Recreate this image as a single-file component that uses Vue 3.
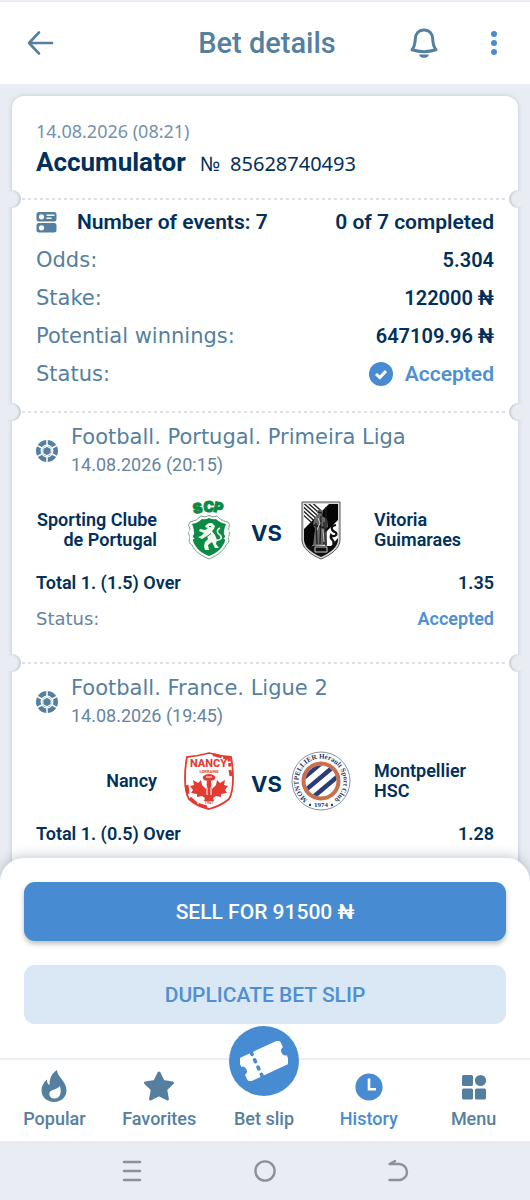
<script setup>
const summary = [
  { label: 'Odds:', value: '5.304' },
  { label: 'Stake:', value: '122000 ₦' },
  { label: 'Potential winnings:', value: '647109.96 ₦' },
]

const events = [
  {
    id: 1,
    league: 'Football. Portugal. Primeira Liga',
    time: '14.08.2026 (20:15)',
    home: 'Sporting Clube de Portugal',
    away: 'Vitoria Guimaraes',
    market: 'Total 1. (1.5) Over',
    odds: '1.35',
    status: 'Accepted',
  },
  {
    id: 2,
    league: 'Football. France. Ligue 2',
    time: '14.08.2026 (19:45)',
    home: 'Nancy',
    away: 'Montpellier HSC',
    market: 'Total 1. (0.5) Over',
    odds: '1.28',
  },
]
</script>

<template>
  <div class="screen">
    <header class="topbar">
      <button type="button" class="icon-btn" aria-label="Back">
        <svg width="28" height="26" viewBox="0 0 28 26" fill="none" stroke="currentColor" stroke-width="2.6" stroke-linecap="round" stroke-linejoin="round">
          <path d="M26 13H3M13 2.500 3 13l10 10.500" />
        </svg>
      </button>
      <h1>Bet details</h1>
      <button type="button" class="icon-btn bell" aria-label="Notifications">
        <svg width="28" height="30" viewBox="0 0 28 30" fill="none" stroke="currentColor" stroke-width="3" stroke-linejoin="round" stroke-linecap="round">
          <path d="M14 2C8.500 2 5.500 6 5.300 11 5.100 16.500 4.500 18.500 2 21.800 9 24 19 24 26 21.800 23.500 18.500 22.900 16.500 22.700 11 22.500 6 19.500 2 14 2Z" />
          <path d="M9 26.500h10c-1 2.700-3 3.300-5 3.300s-4-.6-5-3.300Z" fill="currentColor" stroke="none" />
        </svg>
      </button>
      <button type="button" class="icon-btn dots" aria-label="More">
        <svg width="8" height="26" viewBox="0 0 8 26" fill="currentColor">
          <circle cx="4" cy="4" r="3" />
          <circle cx="4" cy="13" r="3" />
          <circle cx="4" cy="22" r="3" />
        </svg>
      </button>
    </header>

    <main class="content">
      <article class="slip">
        <section class="slip-head">
          <p class="slip-date">14.08.2026 (08:21)</p>
          <h2>Accumulator <span class="number"><span>№</span> <span>85628740493</span></span></h2>
        </section>

        <section class="summary perforated">
          <div class="row">
            <strong class="count">
              <svg width="21" height="21" viewBox="0 0 20 21">
                <rect width="20" height="9.500" rx="2.500" fill="#557f9f" />
                <rect y="11" width="20" height="9.500" rx="2.500" fill="#557f9f" />
                <circle cx="5" cy="4.800" r="2.600" fill="#fff" />
                <circle cx="5" cy="15.800" r="2.600" fill="#fff" />
                <path d="M10 3.200h8M10 6.200h5" stroke="#fff" stroke-width="1.400" />
              </svg>
              Number of events: 7
            </strong>
            <strong class="count">0 of 7 completed</strong>
          </div>
          <div v-for="item in summary" :key="item.label" class="row">
            <span class="label">{{ item.label }}</span>
            <strong>{{ item.value }}</strong>
          </div>
          <div class="row">
            <span class="label">Status:</span>
            <strong class="accepted">
              <svg width="24" height="24" viewBox="0 0 24 24">
                <circle cx="12" cy="12" r="12" fill="#478bd2" />
                <path d="m7 12 3.800 3.600L17 9" fill="none" stroke="#fff" stroke-width="3" />
              </svg>
              Accepted
            </strong>
          </div>
        </section>

        <section v-for="event in events" :key="event.id" class="event perforated">
          <div class="event-head">
            <svg width="22" height="22" viewBox="0 0 22 22">
              <circle cx="11" cy="11" r="11" fill="#557f9f" />
              <circle cx="11" cy="11" r="5.800" fill="none" stroke="#fff" stroke-width="1.200" />
              <path d="M11 6.200 15.200 8.600v4.800L11 15.800l-4.200-2.400V8.600Z" fill="#557f9f" stroke="#fff" stroke-width="1.200" />
              <path d="M11 0v5M11 17v5M16.200 8l4.800-2.700M16.200 14l4.800 2.700M5.800 8 1 5.300M5.800 14 1 16.700" stroke="#fff" stroke-width="1.500" />
            </svg>
            <div>
              <p class="league">{{ event.league }}</p>
              <p class="time">{{ event.time }}</p>
            </div>
          </div>

          <div class="teams">
            <strong class="team home">{{ event.home }}</strong>
            <svg v-if="event.id === 1" class="crest" viewBox="0 0 60 60">
              <text x="15 24.500 34" y="14 12 11.500" rotate="-12 0 12" font-family="Inter, sans-serif" font-weight="900" font-size="14" fill="#0c8a45" stroke="#0c8a45" stroke-width="1">SCP</text>
              <path d="M30 15.500q-4 2.500-8 .5-4 5-11 6-3 3 0 7-3 4 0 9c-2 3 0 6 2 7 3 7 10 11 17 14 7-3 14-7 17-14 2-1 4-4 2-7 3-5 0-9 0-9 3-4 0-7 0-7-7-1-11-6-11-6q-4 2-8-.5Z" fill="#fff" stroke="#71a786" stroke-width="1" />
              <path d="M30 18q-4 2-7 1-4 4-10 5 3 6 1 12-1 5 2 9c3 6 9 9 14 11 5-2 11-5 14-11q3-4 2-9-2-6 1-12-6-1-10-5-3 1-7-1Z" fill="#0c8a45" />
              <path d="M10 32c3-3 6 1 3 3-3 1-1 5 2 3M50 32c-3-3-6 1-3 3 3 1 1 5-2 3" fill="none" stroke="#fff" stroke-width="2" />
              <path d="m27 25 3-2 3 0 3 3-1 3-2 2 3 4 2 5-1 4 3 4h-4l-3-6-4 3 1 5h-4l-1-4 1-4 3-3-1-3-5 3-4-2 3-1 3-3-5-2 1-2 5 1 3-2-3-1Z" fill="#f1f8ef" />
              <path d="M36 40c5 1 8-2 5-5-3-2-4-5 0-7" fill="none" stroke="#f1f8ef" stroke-width="1.500" />
              <path d="M30 26.500h2m-4 10 4-3" stroke="#0c8a45" stroke-width="1" />
            </svg>
            <svg v-else class="crest" viewBox="0 0 60 60">
              <path d="M8 6Q20 5 30 2q10 3 22 4c2 10 4 32-2 42q-8 7-20 10Q17 55 10 48C4 38 6 16 8 6Z" fill="#fff" stroke="#e23b32" stroke-width="1.800" />
              <path d="m34 3.500 16 4 1 8M11 47l7 6 10 3M51 19l1 6M8 34l1 9" fill="none" stroke="#e23b32" stroke-width="3" stroke-dasharray="9 1.500" />
              <text x="29.500" y="16" text-anchor="middle" font-family="Roboto, sans-serif" font-size="11" font-weight="800" fill="#e23b32">NANCY</text>
              <text x="30" y="22" text-anchor="middle" font-family="Roboto, sans-serif" font-size="4" font-weight="700" fill="#e23b32">LORRAINE</text>
              <path d="M26 24q4-2 8 0 4 2 1 5-5 2-10 0-3-3 1-5Z" fill="#e23b32" />
              <path d="M28 30h4l1 8 4-4 1-5 3 3 5-3-1 5 4 1-3 4 2 3-6 1v3l-5-1-3 2 1 3h-10l1-3-3-2-5 1v-3l-6-1 2-3-3-4 4-1-1-5 5 3 3-3 1 5 4 4Z" fill="#e23b32" />
              <path d="m26 32 2 5v7m6-12-2 5v7M27 26h6" fill="none" stroke="#fff" stroke-width="1" />
              <text x="30" y="53" text-anchor="middle" font-family="Roboto, sans-serif" font-size="4" font-weight="700" fill="#e23b32">1967</text>
            </svg>
            <span class="vs">VS</span>
            <svg v-if="event.id === 1" class="crest" viewBox="0 0 60 60">
              <defs>
                <clipPath id="vit-shield">
                  <path d="M13 4h34v36c0 7-8 13-17 17-9-4-17-10-17-17Z" />
                </clipPath>
              </defs>
              <path d="M11 2h38v38c0 8-9 15-19 19-10-4-19-11-19-19Z" fill="#d9d9d9" stroke="#555" stroke-width="1" />
              <g clip-path="url(#vit-shield)">
                <path d="M11 2h38v57H11Z" fill="#fff" />
                <path d="M50 2v15L16 51l-5-5V31L40 2Z" fill="#050505" />
                <path d="M8 3h20M8 6h20M8 9h20M8 12h20M8 15h20M8 18h20" stroke="#222" stroke-width="1.400" transform="rotate(42 18 12)" />
                <path d="m11 45 9 8 10 6 19-14-2-7-7 8H19Z" fill="#111" />
                <path d="M26 11q4-4 6 1l-1 4 5 3 1 8-3 2 2 16-14 1 2-17-2-5 2-7 3-2Z" fill="#686868" />
                <path d="m25 23 1 21m4-28-1 28m4-22v22M23 25l11 3M27 12l4 1M35 7v42" stroke="#202020" stroke-width="1.300" />
                <path d="M24 47h12v5H24ZM27 18l2 5-3 7M32 29l1 13" fill="none" stroke="#c8c8c8" stroke-width="1" />
                <path d="M45 25c-7 1-4 6-1 7 4 2-1 6-4 3-2 6 5 4 2 9" fill="none" stroke="#111" stroke-width="2.200" />
              </g>
            </svg>
            <svg v-else class="crest" viewBox="0 0 60 60">
              <defs>
                <clipPath id="mhsc-disc">
                  <circle cx="30" cy="30" r="15.500" />
                </clipPath>
              </defs>
              <circle cx="30" cy="30" r="29" fill="#fff" stroke="#8792a3" stroke-width="1" />
              <circle cx="30" cy="30" r="17.500" fill="#fff" stroke="#c96f4b" stroke-width="4" />
              <g clip-path="url(#mhsc-disc)" stroke="#293e79" stroke-width="4.500">
                <path d="M8 31 34 9M10 43 48 11M14 53 52 21" />
              </g>
              <path id="mhsc-ring" d="M17 48.500A22.500 22.500 0 1 1 43 48.500" fill="none" />
              <text font-family="'Liberation Serif', serif" font-size="7" font-weight="700" fill="#26376c" text-anchor="middle">
                <textPath href="#mhsc-ring" startOffset="50%">MONTPELLIER Hérault Sport Club</textPath>
              </text>
              <text x="30" y="56" text-anchor="middle" font-family="'Liberation Serif', serif" font-size="7" font-weight="700" fill="#26376c">1974</text>
              <circle cx="19" cy="54" r="1.200" fill="#26376c" />
              <circle cx="41" cy="54" r="1.200" fill="#26376c" />
            </svg>
            <strong class="team">{{ event.away }}</strong>
          </div>

          <div class="bet-row">
            <strong>{{ event.market }}</strong>
            <strong>{{ event.odds }}</strong>
          </div>
          <div v-if="event.status" class="bet-row">
            <span class="label">Status:</span>
            <strong class="accepted">{{ event.status }}</strong>
          </div>
        </section>
      </article>
    </main>

    <footer class="sheet">
      <div class="actions">
        <button type="button" class="btn primary">SELL FOR 91500 ₦</button>
        <button type="button" class="btn secondary">DUPLICATE BET SLIP</button>
      </div>

      <nav class="tabs">
        <a href="#popular" class="tab">
          <svg width="28" height="34" viewBox="0 0 28 34">
            <path d="M17 1c0 7 9.500 11 9.500 20.500C26.500 28 21 33 14 33S1.500 28 1.500 21.500C1.500 17 3.500 13.500 7 10.500c0 3 .6 4.600 2.500 5.500C9.500 9 12 4 17 1Z" fill="currentColor" />
            <path d="M19.800 17c2.200 6 .5 12.500-5.500 12.500-3 0-5-2-5-4.500 0-5 7-3.500 10.500-8Z" fill="#fff" />
          </svg>
          Popular
        </a>
        <a href="#favorites" class="tab">
          <svg width="32" height="34" viewBox="0 0 32 34">
            <path d="m16 4 4.200 8.600 9.300 1.300-6.800 6.500 1.700 9.600-8.400-4.300L7.600 30l1.700-9.600-6.800-6.500 9.300-1.300Z" fill="currentColor" stroke="currentColor" stroke-width="3" stroke-linejoin="round" />
          </svg>
          Favorites
        </a>
        <a href="#slip" class="tab">
          <span class="fab">
            <svg width="48" height="40" viewBox="0 0 48 40">
              <g transform="rotate(-25 24 20)">
                <path d="M5 7h38q4 0 4 4v4.500a4.600 4.600 0 0 0 0 9V29q0 4-4 4H5q-4 0-4-4v-4.500a4.600 4.600 0 0 0 0-9V11q0-4 4-4Z" fill="#fff" />
                <path d="M16 7v28" stroke="#478bd2" stroke-width="3.600" stroke-dasharray="2 6" stroke-linecap="round" />
              </g>
            </svg>
          </span>
          Bet slip
        </a>
        <a href="#history" class="tab active">
          <svg width="28" height="34" viewBox="0 0 28 34">
            <circle cx="14" cy="18" r="13.600" fill="currentColor" />
            <path d="M14 9.500v10.800h7" fill="none" stroke="#fff" stroke-width="2.600" />
          </svg>
          History
        </a>
        <a href="#menu" class="tab">
          <svg width="26" height="34" viewBox="0 0 26 34" fill="currentColor">
            <rect x="1" y="6" width="11" height="11" rx="1.500" />
            <circle cx="19.500" cy="11.500" r="5.600" />
            <rect x="1" y="19.500" width="11" height="11" rx="1.500" />
            <rect x="14" y="19.500" width="11" height="11" rx="1.500" />
          </svg>
          Menu
        </a>
      </nav>

      <div class="system">
        <button type="button" aria-label="Recent apps">
          <svg width="22" height="24" viewBox="0 0 22 24" fill="none" stroke="currentColor" stroke-width="2.600" stroke-linecap="round">
            <path d="M3 3h16M3 12h16M3 21h16" />
          </svg>
        </button>
        <button type="button" aria-label="Home">
          <svg width="22" height="24" viewBox="0 0 22 24" fill="none" stroke="currentColor" stroke-width="2.400">
            <circle cx="11" cy="12" r="9.600" />
          </svg>
        </button>
        <button type="button" aria-label="Go back">
          <svg width="22" height="24" viewBox="0 0 22 24" fill="none" stroke="currentColor" stroke-width="2.400" stroke-linecap="round" stroke-linejoin="round">
            <path d="M8 2 2.500 5H12a8 8 0 0 1 0 16H2.500" />
          </svg>
        </button>
      </div>
    </footer>
  </div>
</template>

<style>
body {
  margin: 0;
  background: #e9edf3;
}
</style>

<style scoped>
.screen {
  display: flex;
  flex-direction: column;
  height: 100vh;
  font-family: Roboto, "Liberation Sans", sans-serif;
  color: #00305b;
  background: #e9edf3;
}
.screen * {
  box-sizing: border-box;
}
h1,
h2,
p {
  margin: 0;
}
button {
  font: inherit;
  border: none;
  background: none;
  padding: 0;
  cursor: pointer;
}
svg {
  display: block;
  flex-shrink: 0;
}
strong {
  font-weight: 600;
}

.topbar {
  display: grid;
  grid-template-columns: 96px 1fr 80px 54px;
  align-items: center;
  flex-shrink: 0;
  height: 84px;
  padding: 0 12px 0 26px;
  border-top: 2px solid #e9edf3;
  background: #fff;
  color: #557f9f;
}
.topbar h1 {
  padding-left: 28px;
  font-size: 29px;
  line-height: 36px;
  font-weight: 500;
  text-align: center;
}
.icon-btn {
  display: flex;
  color: #557f9f;
}
.bell {
  justify-content: center;
}
.dots {
  justify-content: flex-end;
  padding-right: 20px;
  color: #478bd2;
}

.content {
  display: flex;
  flex: 1;
  min-height: 0;
  padding: 12px 12px 0;
  overflow: hidden;
}
.slip {
  flex: 1;
  border-radius: 12px 12px 0 0;
  background: #fff;
  box-shadow: 0 0 4px rgba(60, 80, 110, 0.25);
}
.slip-head {
  padding: 23px 24px 18px;
}
.slip-date {
  font-family: "Noto Sans", sans-serif;
  font-size: 18px;
  line-height: 24px;
  color: #7492ab;
}
.slip-head h2 {
  display: flex;
  align-items: baseline;
  gap: 14px;
  padding-top: 3px;
  font-size: 26px;
  line-height: 32px;
  font-weight: 700;
}
.number {
  display: flex;
  gap: 10px;
  font-family: "Noto Sans", sans-serif;
  font-size: 20px;
  font-weight: 400;
}

/* dashed tear line with a half-round notch at both ends */
.perforated {
  position: relative;
  padding: 0 24px;
  background: repeating-linear-gradient(90deg, #dfe2ea 0 3px, transparent 3px 6px) 10px 0 / calc(100% - 20px) 2px no-repeat;
}
.perforated::before,
.perforated::after {
  content: "";
  position: absolute;
  top: -8px;
  width: 13px;
  height: 18px;
  background: #e9edf3;
}
.perforated::before {
  left: -4px;
  border-radius: 0 9px 9px 0;
  box-shadow: inset -2px 0 2px rgba(60, 70, 90, 0.18);
}
.perforated::after {
  right: -4px;
  border-radius: 9px 0 0 9px;
  box-shadow: inset 2px 0 2px rgba(60, 70, 90, 0.18);
}

.summary {
  padding-top: 5px;
  padding-bottom: 18px;
}
.row,
.bet-row {
  display: flex;
  align-items: center;
  justify-content: space-between;
}
.row {
  height: 38px;
  font-size: 20px;
}
.label,
.league {
  font-family: "DejaVu Sans", sans-serif;
  font-size: 21px;
  color: #557f9f;
}
.count,
.row .accepted {
  display: flex;
  align-items: center;
  font-size: 21px;
}
.count {
  gap: 20px;
}
.row .accepted {
  gap: 12px;
}
.accepted {
  color: #4f8fd2;
}

.event {
  padding-top: 12px;
  padding-bottom: 32px;
}
.event-head {
  display: flex;
  align-items: center;
  gap: 13px;
}
.league {
  line-height: 28px;
}
.time {
  font-size: 18px;
  line-height: 28px;
  color: #6585a0;
}
.teams {
  display: grid;
  grid-template-columns: 1fr 60px 28px 60px 1fr;
  align-items: center;
  column-gap: 12px;
  padding: 21px 0 10px;
}
.team {
  max-width: 124px;
  padding-left: 11px;
  font-size: 18px;
  line-height: 20px;
}
.home {
  max-width: none;
  padding: 0 10px 0 0;
  justify-self: end;
  text-align: right;
}
.crest {
  width: 60px;
  height: 60px;
}
.vs {
  font-family: Inter, sans-serif;
  font-size: 22px;
  line-height: 28px;
  padding-top: 6px;
  font-weight: 700;
  text-align: center;
}
.bet-row {
  height: 24px;
  font-size: 18px;
}
.bet-row + .bet-row {
  margin-top: 12px;
}
.bet-row .label {
  font-size: 18px;
  color: #6585a0;
}

.sheet {
  position: relative;
  flex-shrink: 0;
  margin-top: -22px;
  border-radius: 24px 24px 0 0;
  background: #fff;
  box-shadow: 0 -2px 12px rgba(40, 50, 70, 0.25);
}
.actions {
  display: flex;
  flex-direction: column;
  gap: 24px;
  padding: 24px 24px 34px;
}
.btn {
  height: 59px;
  border-radius: 11px;
  font-size: 21px;
  font-weight: 500;
}
.primary {
  background: #478bd2;
  color: #fff;
  box-shadow: 0 3px 5px rgba(0, 0, 0, 0.25);
}
.secondary {
  background: #dae7f4;
  color: #4f8fd2;
}

.tabs {
  display: grid;
  grid-template-columns: repeat(5, 1fr);
  height: 83px;
  padding: 0 4px 0 2px;
  border-top: 2px solid #ebeef2;
}
.tab {
  position: relative;
  display: flex;
  flex-direction: column;
  align-items: center;
  justify-content: flex-end;
  gap: 4px;
  padding-bottom: 10px;
  font-size: 18px;
  line-height: 24px;
  font-weight: 500;
  color: #557f9f;
  text-decoration: none;
}
.active {
  color: #478bd2;
}
.fab {
  position: absolute;
  top: -34px;
  display: flex;
  align-items: center;
  justify-content: center;
  width: 70px;
  height: 70px;
  border-radius: 50%;
  background: #478bd2;
}

.system {
  display: flex;
  align-items: center;
  justify-content: space-evenly;
  height: 59px;
  padding: 0 10px;
  background: #e9edf3;
}
.system button {
  display: flex;
  color: #8d9095;
}
</style>
